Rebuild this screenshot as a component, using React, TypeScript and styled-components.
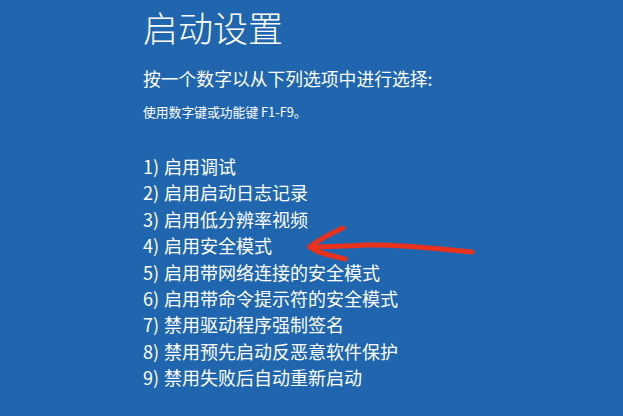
import React from "react";
import styled, { createGlobalStyle } from "styled-components";

const GlobalStyle = createGlobalStyle`
  html, body {
    margin: 0;
    padding: 0;
    background: #1f66ae;
  }
  body {
    font-family: "Noto Sans CJK SC", "Noto Sans", sans-serif;
    color: #ffffff;
  }
`;

const Screen = styled.div`
  position: relative;
  width: 623px;
  height: 416px;
  overflow: hidden;
  background: #1f66ae;
  box-sizing: border-box;
  padding: 5px 0 0 143px;
  display: flex;
  flex-direction: column;
`;

const Title = styled.h1`
  margin: 0;
  font-size: 35px;
  font-weight: 300;
  line-height: 44px;
  letter-spacing: 0;
`;

const Prompt = styled.div`
  margin-top: 17px;
  font-size: 17.8px;
  font-weight: 400;
  line-height: 24px;
`;

const Hint = styled.div`
  margin-top: 13px;
  font-size: 12.8px;
  line-height: 18px;
`;

const OptionList = styled.ol`
  list-style: none;
  margin: 32px 0 0;
  padding: 0;
  display: flex;
  flex-direction: column;
`;

const Option = styled.li`
  height: 26.4px;
  font-size: 18px;
  line-height: 26.4px;
  white-space: nowrap;
`;

const Number = styled.span`
  margin-right: 5px;
`;

const Annotation = styled.svg`
  position: absolute;
  left: 0;
  top: 0;
  pointer-events: none;
`;

const options = [
  "启用调试",
  "启用启动日志记录",
  "启用低分辨率视频",
  "启用安全模式",
  "启用带网络连接的安全模式",
  "启用带命令提示符的安全模式",
  "禁用驱动程序强制签名",
  "禁用预先启动反恶意软件保护",
  "禁用失败后自动重新启动",
];

const App = () => {
  return (
    <Screen>
      <GlobalStyle />
      <Title>启动设置</Title>
      <Prompt>按一个数字以从下列选项中进行选择:</Prompt>
      <Hint>使用数字键或功能键 F1-F9。</Hint>
      <OptionList>
        {options.map((label, i) => (
          <Option key={label}>
            <Number>{i + 1})</Number>
            {label}
          </Option>
        ))}
      </OptionList>
      {/* hand-drawn red arrow pointing at option 4 */}
      <Annotation width="623" height="416" viewBox="0 0 623 416">
        <path
          d="M472 252 C 440 249, 400 244, 366 245 C 345 246, 325 247, 310 247"
          fill="none"
          stroke="#e8321e"
          strokeWidth="5"
          strokeLinecap="round"
        />
        <path
          d="M343 228 C 330 234, 318 240, 310 247 C 318 253, 332 256, 345 259"
          fill="none"
          stroke="#e8321e"
          strokeWidth="5"
          strokeLinecap="round"
          strokeLinejoin="round"
        />
      </Annotation>
    </Screen>
  );
};

export default App;
